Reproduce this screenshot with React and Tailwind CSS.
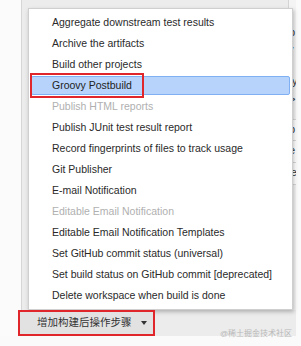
import { Fragment } from "react";

const items = [
  { label: "Aggregate downstream test results" },
  { label: "Archive the artifacts" },
  { label: "Build other projects" },
  { label: "Groovy Postbuild", active: true },
  { label: "Publish HTML reports", disabled: true },
  { label: "Publish JUnit test result report" },
  { label: "Record fingerprints of files to track usage" },
  { label: "Git Publisher" },
  { label: "E-mail Notification" },
  { label: "Editable Email Notification", disabled: true },
  { label: "Editable Email Notification Templates" },
  { label: "Set GitHub commit status (universal)" },
  { label: "Set build status on GitHub commit [deprecated]" },
  { label: "Delete workspace when build is done" },
];

const MenuItem = ({ label, active, disabled }) => {
  if (active) {
    return (
      <li className="relative h-[21px] px-[2px] flex items-center">
        <div className="w-full h-[19px] bg-[#b7d3fb] border border-[#7fb0f3] rounded-[2px] flex items-center pl-[20px] text-[#222]">
          {label}
        </div>
        <div className="absolute left-[1px] top-[-2px] w-[114px] h-[25px] border-2 border-[#e0262b]" />
      </li>
    );
  }
  return (
    <li
      className={
        "h-[21px] flex items-center pl-[23px] whitespace-nowrap " +
        (disabled ? "text-[#b0b0b0]" : "text-[#2a2a2a]")
      }
    >
      {label}
    </li>
  );
};

export default function App() {
  return (
    <div
      className="relative w-[301px] h-[346px] overflow-hidden bg-[#fafafa]"
      style={{ fontFamily: '"Liberation Sans", Arial, "Noto Sans CJK SC", sans-serif' }}
    >
      <div className="flex h-[336px]">
        <div className="w-[21px] bg-[#fbfbfb]" />
        <div className="flex-1 flex flex-col border-l border-[#d6d6d6] bg-[#ececec]">
          <div className="flex-1 flex justify-end">
            {/* page content peeking out right of the menu */}
            <div className="w-[8px] border-l border-[#d4d4d4] bg-[#f4f4f4] text-[11px] text-[#333] leading-none overflow-hidden flex flex-col whitespace-nowrap">
              <span className="mt-[27px] -ml-[3px]">ıb</span>
              <span className="mt-[6px] -ml-[1px]">v</span>
              <span className="mt-[21px] -ml-[3px]">dy</span>
              <span className="mt-[7px]">&gt;</span>
              <div className="mt-[14px] border-t border-[#d8d8d8] pt-[4px] h-[21px] bg-white">p</div>
              <div className="border-t border-[#d8d8d8] pt-[4px] h-[22px] bg-white">e</div>
              <div className="border-t border-[#d8d8d8] pt-[4px] h-[22px] -ml-[2px] bg-white">re</div>
              <div className="border-t border-[#d8d8d8] flex-1" />
            </div>
          </div>
          <div className="h-[26px]" />
        </div>
        <div className="w-[5px] bg-[#fafafa]" />
      </div>

      {/* dropdown menu */}
      <ul className="absolute left-[28px] top-[8px] w-[265px] h-[302px] bg-white border border-[#cfcfcf] shadow-[1px_2px_4px_rgba(0,0,0,0.25)] pt-[3px] text-[10.5px]">
        {items.map((item) => (
          <Fragment key={item.label}>
            <MenuItem {...item} />
          </Fragment>
        ))}
      </ul>

      {/* add post-build step button */}
      <div className="absolute left-[18px] top-[310px] w-[137px] h-[26px] border-2 border-[#e0262b] bg-[#e2e2e2] flex items-center pl-[17px] gap-[9px] whitespace-nowrap">
        <span className="text-[10.5px] text-[#333]">增加构建后操作步骤</span>
        <span className="w-0 h-0 border-l-[3px] border-r-[3px] border-t-[4px] border-l-transparent border-r-transparent border-t-[#333]" />
      </div>

      <div className="absolute right-[9px] top-[328px] text-[8px] text-[#b8b8b8] whitespace-nowrap">@稀土掘金技术社区</div>
    </div>
  );
}
